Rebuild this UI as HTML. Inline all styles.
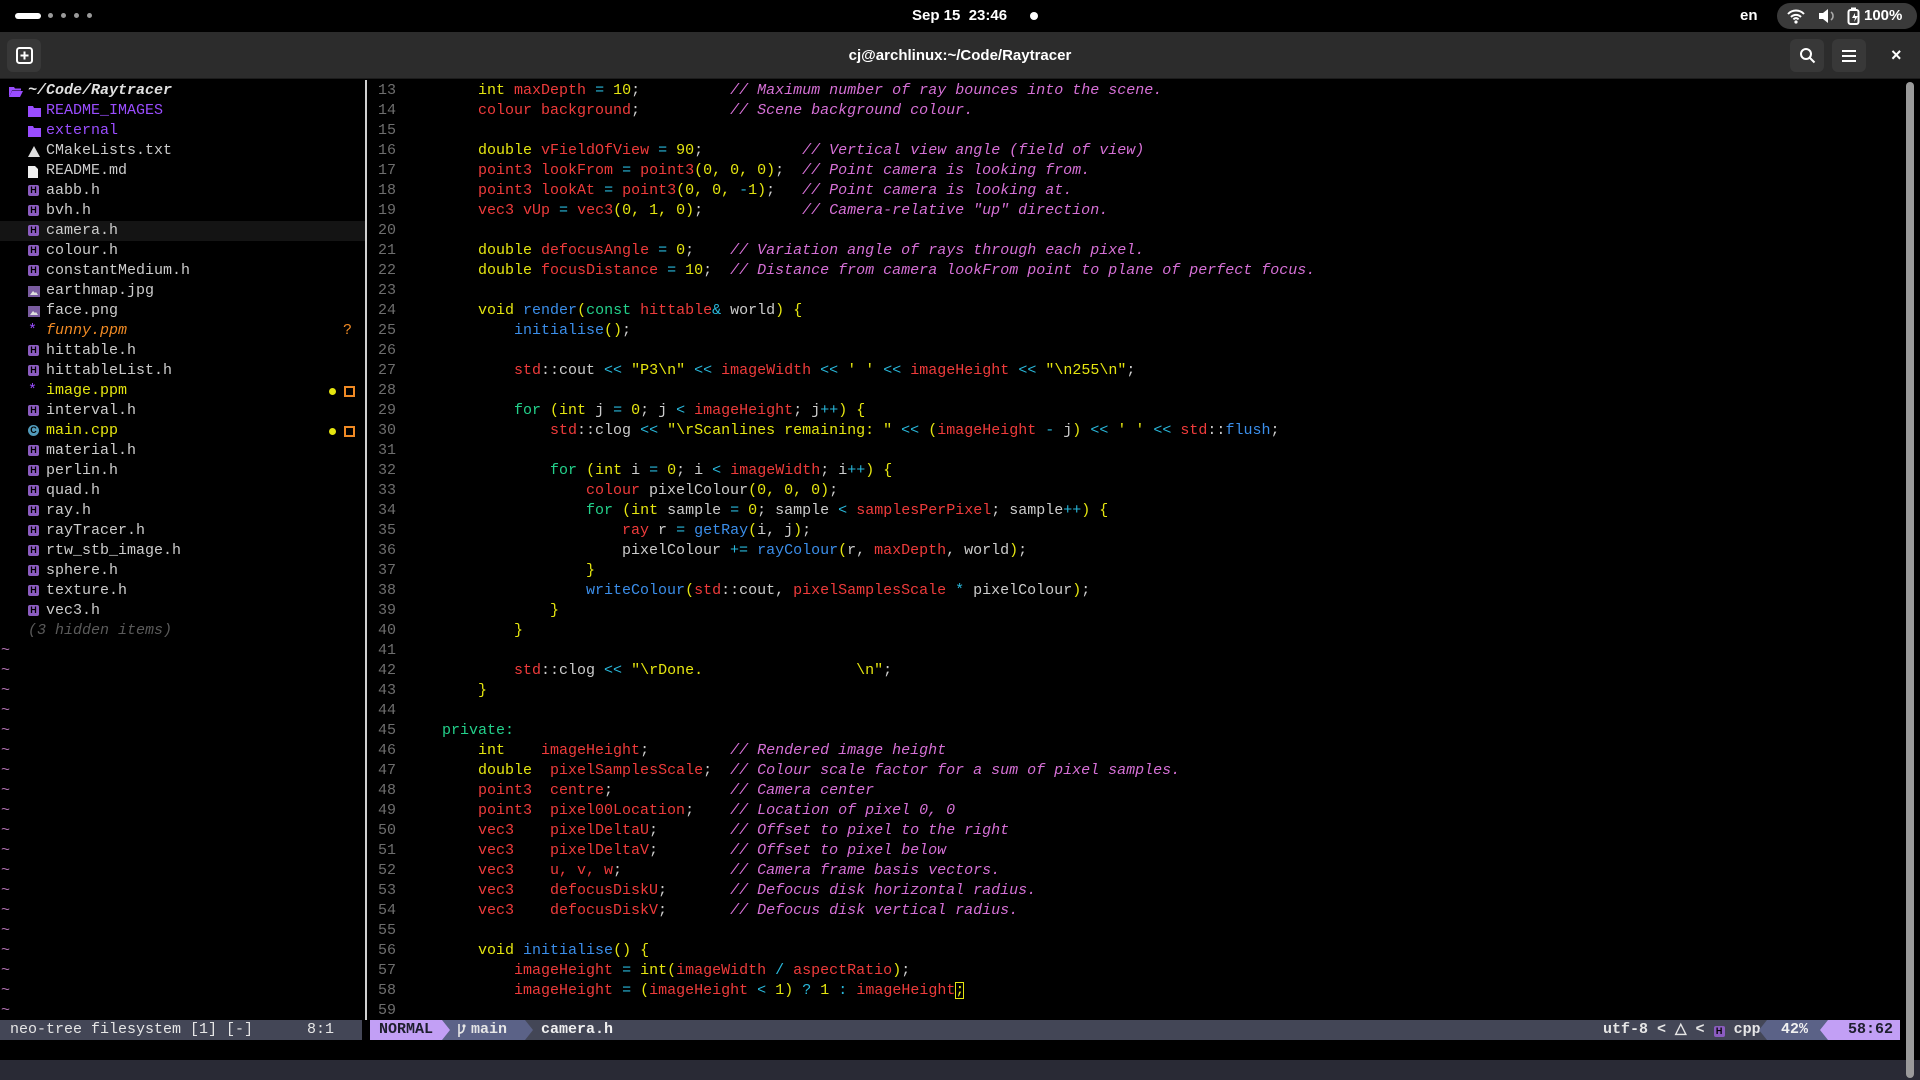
<!DOCTYPE html>
<html style="overflow:hidden;height:1080px"><head><meta charset="utf-8"><style>
*{margin:0;padding:0;box-sizing:border-box}
body{width:1920px;height:1080px;background:#000;overflow:hidden;position:relative;font-family:"Liberation Mono",monospace;font-size:15px;color:#cccccc}
.abs{position:absolute}
.top{left:0;top:0;width:1920px;height:32px;background:#000;font-family:"Liberation Sans",sans-serif;color:#fff;font-weight:bold;font-size:15px}
.tb{left:0;top:32px;width:1920px;height:47px;background:#2c2c2c;border-bottom:1px solid #1c1c1c;font-family:"Liberation Sans",sans-serif}
.btn{position:absolute;top:7px;width:34px;height:33px;background:#383838;border-radius:6px}
pre{font-family:"Liberation Mono",monospace;font-size:15px;line-height:20px;white-space:pre}
.row{position:absolute;height:20px;line-height:20px;white-space:pre}
.k{color:#e5e510}.r{color:#ef3b3b}.c{color:#29b8db}.m{color:#d670d6;font-style:italic}.g{color:#23d18b}.b{color:#3b8eea}.w{color:#cccccc}
.ln{position:absolute;left:368px;width:28px;text-align:right;color:#6e6e6e}
.hb{display:inline-block;width:11px;height:11px;background:#8b5cc0;border-radius:2px;color:#000;font-size:9px;line-height:11px;text-align:center;font-family:"Liberation Sans";font-weight:bold;vertical-align:-1px}
.fi{position:absolute;left:28px;top:5px}
.tn{position:absolute;left:46px}
</style></head><body>
<div class="abs top">
 <div class="abs" style="left:15px;top:13px;width:26px;height:6px;border-radius:3px;background:#fff"></div>
 <div class="abs" style="left:48px;top:13px;width:5px;height:5px;border-radius:3px;background:#9a9a9a"></div>
 <div class="abs" style="left:61px;top:13px;width:5px;height:5px;border-radius:3px;background:#9a9a9a"></div>
 <div class="abs" style="left:74px;top:13px;width:5px;height:5px;border-radius:3px;background:#9a9a9a"></div>
 <div class="abs" style="left:87px;top:13px;width:5px;height:5px;border-radius:3px;background:#9a9a9a"></div>
 <div class="abs" style="left:912px;top:7px">Sep 15&nbsp; 23:46</div>
 <div class="abs" style="left:1030px;top:12px;width:8px;height:8px;border-radius:4px;background:#fff"></div>
 <div class="abs" style="left:1740px;top:7px">en</div>
 <div class="abs" style="left:1777px;top:3px;width:140px;height:26px;border-radius:13px;background:#3a3a3a"></div>
 <svg class="abs" style="left:1787px;top:8px" width="18" height="16" viewBox="0 0 18 16"><path d="M1 6a11 11 0 0 1 16 0M4 9a7 7 0 0 1 10 0M6.5 11.5a3 3 0 0 1 5 0" stroke="#fff" stroke-width="2" fill="none"/><circle cx="9" cy="14" r="1.6" fill="#fff"/></svg>
 <svg class="abs" style="left:1818px;top:8px" width="18" height="16" viewBox="0 0 18 16"><path d="M1 5h4l5-4v14l-5-4H1z" fill="#fff"/><path d="M13 4a5 5 0 0 1 0 8" stroke="#aaa" stroke-width="1.6" fill="none"/></svg>
 <svg class="abs" style="left:1847px;top:7px" width="14" height="18" viewBox="0 0 14 18"><rect x="1.5" y="3" width="10" height="14" rx="2" fill="none" stroke="#fff" stroke-width="2"/><rect x="4" y="0.5" width="5" height="3" fill="#fff"/><path d="M8 6l-3 5h3l-1 4 4-6H8z" fill="#fff"/></svg>
 <div class="abs" style="left:1864px;top:7px">100%</div>
</div>
<div class="abs tb">
 <div class="btn" style="left:7px"><svg style="position:absolute;left:9px;top:8px" width="17" height="17" viewBox="0 0 17 17"><rect x="1" y="1" width="15" height="15" rx="2.5" fill="none" stroke="#fff" stroke-width="2"/><path d="M8.5 4.5v8M4.5 8.5h8" stroke="#fff" stroke-width="2"/></svg></div>
 <div class="abs" style="left:0;width:1920px;top:15px;text-align:center;color:#fff;font-weight:bold;font-size:15px">cj@archlinux:~/Code/Raytracer</div>
 <div class="btn" style="left:1790px"><svg style="position:absolute;left:9px;top:8px" width="17" height="17" viewBox="0 0 17 17"><circle cx="7" cy="7" r="5" fill="none" stroke="#fff" stroke-width="2"/><path d="M10.5 10.5l5 5" stroke="#fff" stroke-width="2"/></svg></div>
 <div class="btn" style="left:1832px"><svg style="position:absolute;left:9px;top:10px" width="16" height="14" viewBox="0 0 16 14"><path d="M1 2h14M1 7h14M1 12h14" stroke="#fff" stroke-width="2"/></svg></div>
 <div class="abs" style="left:1891px;top:13px;color:#fff;font-size:18px;font-weight:bold">×</div>
</div>

<!-- sidebar -->
<div class="abs" style="left:0;top:81px;width:365px;height:939px">
 <div class="row" style="top:140px;left:0;width:365px;background:#141414"></div>
 <div class="row" style="top:0;left:0;width:365px"><svg style="position:absolute;left:9px;top:5px" width="14" height="11" viewBox="0 0 14 11"><path d="M0 1h5l1 1.5h6v2H3L0 11z" fill="#9a4dff"/><path d="M3 5h11l-3 6H0z" fill="#9a4dff"/></svg><span style="position:absolute;left:28px;color:#e0e0e0;font-style:italic;font-weight:bold">~/Code/Raytracer</span></div>
 <div class="row" style="top:20px;left:0;width:365px"><svg class="fi" width="13" height="11" viewBox="0 0 13 11"><path d="M0 0h5l1 2h7v9H0z" fill="#9a4dff"/></svg><span class="tn" style="color:#9a4dff">README_IMAGES</span></div>
 <div class="row" style="top:40px;left:0;width:365px"><svg class="fi" width="13" height="11" viewBox="0 0 13 11"><path d="M0 0h5l1 2h7v9H0z" fill="#9a4dff"/></svg><span class="tn" style="color:#9a4dff">external</span></div>
 <div class="row" style="top:60px;left:0"><svg class="fi" width="12" height="11" viewBox="0 0 12 11"><path d="M6 0L12 11H0z" fill="#ddd"/></svg><span class="tn">CMakeLists.txt</span></div>
 <div class="row" style="top:80px;left:0"><svg class="fi" width="10" height="12" viewBox="0 0 10 12"><path d="M0 0h7l3 3v9H0z" fill="#eee"/></svg><span class="tn">README.md</span></div>
 <div class="row" style="top:100px"><span class="hb" style="position:absolute;left:28px;top:4px">H</span><span class="tn">aabb.h</span></div>
 <div class="row" style="top:120px"><span class="hb" style="position:absolute;left:28px;top:4px">H</span><span class="tn">bvh.h</span></div>
 <div class="row" style="top:140px"><span class="hb" style="position:absolute;left:28px;top:4px">H</span><span class="tn">camera.h</span></div>
 <div class="row" style="top:160px"><span class="hb" style="position:absolute;left:28px;top:4px">H</span><span class="tn">colour.h</span></div>
 <div class="row" style="top:180px"><span class="hb" style="position:absolute;left:28px;top:4px">H</span><span class="tn">constantMedium.h</span></div>
 <div class="row" style="top:200px"><svg class="fi" width="12" height="11" viewBox="0 0 12 11"><rect width="12" height="11" fill="#7a5ca0"/><path d="M2 9l3-4 2 2 1-1 2 3z" fill="#ddd"/></svg><span class="tn">earthmap.jpg</span></div>
 <div class="row" style="top:220px"><svg class="fi" width="12" height="11" viewBox="0 0 12 11"><rect width="12" height="11" fill="#7a5ca0"/><path d="M2 9l3-4 2 2 1-1 2 3z" fill="#ddd"/></svg><span class="tn">face.png</span></div>
 <div class="row" style="top:240px;width:365px"><span style="position:absolute;left:28px;color:#9a4dff">*</span><span class="tn" style="color:#f08a24;font-style:italic">funny.ppm</span><span style="position:absolute;left:343px;color:#f08a24">?</span></div>
 <div class="row" style="top:260px"><span class="hb" style="position:absolute;left:28px;top:4px">H</span><span class="tn">hittable.h</span></div>
 <div class="row" style="top:280px"><span class="hb" style="position:absolute;left:28px;top:4px">H</span><span class="tn">hittableList.h</span></div>
 <div class="row" style="top:300px;width:365px"><span style="position:absolute;left:28px;color:#9a4dff">*</span><span class="tn" style="color:#e5e510">image.ppm</span><span class="abs" style="left:329px;top:7px;width:7px;height:7px;border-radius:4px;background:#e5e510"></span><span class="abs" style="left:344px;top:5px;width:11px;height:11px;border:2px solid #f08a24"></span></div>
 <div class="row" style="top:320px"><span class="hb" style="position:absolute;left:28px;top:4px">H</span><span class="tn">interval.h</span></div>
 <div class="row" style="top:340px;width:365px"><span class="hb" style="position:absolute;left:28px;top:4px;background:#519aba;border-radius:6px">C</span><span class="tn" style="color:#e5e510">main.cpp</span><span class="abs" style="left:329px;top:7px;width:7px;height:7px;border-radius:4px;background:#e5e510"></span><span class="abs" style="left:344px;top:5px;width:11px;height:11px;border:2px solid #f08a24"></span></div>
 <div class="row" style="top:360px"><span class="hb" style="position:absolute;left:28px;top:4px">H</span><span class="tn">material.h</span></div>
 <div class="row" style="top:380px"><span class="hb" style="position:absolute;left:28px;top:4px">H</span><span class="tn">perlin.h</span></div>
 <div class="row" style="top:400px"><span class="hb" style="position:absolute;left:28px;top:4px">H</span><span class="tn">quad.h</span></div>
 <div class="row" style="top:420px"><span class="hb" style="position:absolute;left:28px;top:4px">H</span><span class="tn">ray.h</span></div>
 <div class="row" style="top:440px"><span class="hb" style="position:absolute;left:28px;top:4px">H</span><span class="tn">rayTracer.h</span></div>
 <div class="row" style="top:460px"><span class="hb" style="position:absolute;left:28px;top:4px">H</span><span class="tn">rtw_stb_image.h</span></div>
 <div class="row" style="top:480px"><span class="hb" style="position:absolute;left:28px;top:4px">H</span><span class="tn">sphere.h</span></div>
 <div class="row" style="top:500px"><span class="hb" style="position:absolute;left:28px;top:4px">H</span><span class="tn">texture.h</span></div>
 <div class="row" style="top:520px"><span class="hb" style="position:absolute;left:28px;top:4px">H</span><span class="tn">vec3.h</span></div>
 <div class="row" style="top:540px;left:28px;color:#5a5a5a;font-style:italic">(3 hidden items)</div>
 <pre class="abs" style="left:1px;top:560px;color:#b070b0">~
~
~
~
~
~
~
~
~
~
~
~
~
~
~
~
~
~
~</pre>
</div>
<div class="abs" style="left:365px;top:80px;width:2px;height:940px;background:#d0d0d0"></div>

<!-- line numbers -->
<pre class="ln" style="top:81px">13
14
15
16
17
18
19
20
21
22
23
24
25
26
27
28
29
30
31
32
33
34
35
36
37
38
39
40
41
42
43
44
45
46
47
48
49
50
51
52
53
54
55
56
57
58
59</pre>

<pre class="abs" style="left:442px;top:81px">    <span class="k">int</span> <span class="r">maxDepth</span> <span class="c">=</span> <span class="k">10</span>;          <span class="m">// Maximum number of ray bounces into the scene.</span>
    <span class="r">colour background</span>;          <span class="m">// Scene background colour.</span>

    <span class="k">double</span> <span class="r">vFieldOfView</span> <span class="c">=</span> <span class="k">90</span>;           <span class="m">// Vertical view angle (field of view)</span>
    <span class="r">point3 lookFrom</span> <span class="c">=</span> <span class="r">point3</span><span class="k">(0, 0, 0)</span>;  <span class="m">// Point camera is looking from.</span>
    <span class="r">point3 lookAt</span> <span class="c">=</span> <span class="r">point3</span><span class="k">(0, 0, </span><span class="c">-</span><span class="k">1)</span>;   <span class="m">// Point camera is looking at.</span>
    <span class="r">vec3 vUp</span> <span class="c">=</span> <span class="r">vec3</span><span class="k">(0, 1, 0)</span>;           <span class="m">// Camera-relative "up" direction.</span>

    <span class="k">double</span> <span class="r">defocusAngle</span> <span class="c">=</span> <span class="k">0</span>;    <span class="m">// Variation angle of rays through each pixel.</span>
    <span class="k">double</span> <span class="r">focusDistance</span> <span class="c">=</span> <span class="k">10</span>;  <span class="m">// Distance from camera lookFrom point to plane of perfect focus.</span>

    <span class="k">void</span> <span class="b">render</span><span class="k">(</span><span class="g">const</span> <span class="r">hittable</span><span class="c">&amp;</span> world<span class="k">)</span> <span class="k">{</span>
        <span class="b">initialise</span><span class="k">()</span>;

        <span class="r">std</span>::cout <span class="c">&lt;&lt;</span> <span class="k">"P3\n"</span> <span class="c">&lt;&lt;</span> <span class="r">imageWidth</span> <span class="c">&lt;&lt;</span> <span class="k">' '</span> <span class="c">&lt;&lt;</span> <span class="r">imageHeight</span> <span class="c">&lt;&lt;</span> <span class="k">"\n255\n"</span>;

        <span class="g">for</span> <span class="k">(int</span> j <span class="c">=</span> <span class="k">0</span>; j <span class="c">&lt;</span> <span class="r">imageHeight</span>; j<span class="c">++</span><span class="k">) {</span>
            <span class="r">std</span>::clog <span class="c">&lt;&lt;</span> <span class="k">"\rScanlines remaining: "</span> <span class="c">&lt;&lt;</span> <span class="k">(</span><span class="r">imageHeight</span> <span class="c">-</span> j<span class="k">)</span> <span class="c">&lt;&lt;</span> <span class="k">' '</span> <span class="c">&lt;&lt;</span> <span class="r">std</span>::<span class="b">flush</span>;

            <span class="g">for</span> <span class="k">(int</span> i <span class="c">=</span> <span class="k">0</span>; i <span class="c">&lt;</span> <span class="r">imageWidth</span>; i<span class="c">++</span><span class="k">) {</span>
                <span class="r">colour</span> pixelColour<span class="k">(0, 0, 0)</span>;
                <span class="g">for</span> <span class="k">(int</span> sample <span class="c">=</span> <span class="k">0</span>; sample <span class="c">&lt;</span> <span class="r">samplesPerPixel</span>; sample<span class="c">++</span><span class="k">) {</span>
                    <span class="r">ray</span> r <span class="c">=</span> <span class="b">getRay</span><span class="k">(</span>i, j<span class="k">)</span>;
                    pixelColour <span class="c">+=</span> <span class="b">rayColour</span><span class="k">(</span>r, <span class="r">maxDepth</span>, world<span class="k">)</span>;
                <span class="k">}</span>
                <span class="b">writeColour</span><span class="k">(</span><span class="r">std</span>::cout, <span class="r">pixelSamplesScale</span> <span class="c">*</span> pixelColour<span class="k">)</span>;
            <span class="k">}</span>
        <span class="k">}</span>

        <span class="r">std</span>::clog <span class="c">&lt;&lt;</span> <span class="k">"\rDone.                 \n"</span>;
    <span class="k">}</span>

<span class="g">private:</span>
    <span class="k">int</span>    <span class="r">imageHeight</span>;         <span class="m">// Rendered image height</span>
    <span class="k">double</span>  <span class="r">pixelSamplesScale</span>;  <span class="m">// Colour scale factor for a sum of pixel samples.</span>
    <span class="r">point3  centre</span>;             <span class="m">// Camera center</span>
    <span class="r">point3  pixel00Location</span>;    <span class="m">// Location of pixel 0, 0</span>
    <span class="r">vec3    pixelDeltaU</span>;        <span class="m">// Offset to pixel to the right</span>
    <span class="r">vec3    pixelDeltaV</span>;        <span class="m">// Offset to pixel below</span>
    <span class="r">vec3    u, v, w</span>;            <span class="m">// Camera frame basis vectors.</span>
    <span class="r">vec3    defocusDiskU</span>;       <span class="m">// Defocus disk horizontal radius.</span>
    <span class="r">vec3    defocusDiskV</span>;       <span class="m">// Defocus disk vertical radius.</span>

    <span class="k">void</span> <span class="b">initialise</span><span class="k">() {</span>
        <span class="r">imageHeight</span> <span class="c">=</span> <span class="k">int(</span><span class="r">imageWidth</span> <span class="c">/</span> <span class="r">aspectRatio</span><span class="k">)</span>;
        <span class="r">imageHeight</span> <span class="c">=</span> <span class="k">(</span><span class="r">imageHeight</span> <span class="c">&lt;</span> <span class="k">1)</span> <span class="c">?</span> <span class="k">1</span> <span class="c">:</span> <span class="r">imageHeight</span><span style="outline:1px solid #e5e510;outline-offset:-1px;color:#e5e510">;</span></pre>

<!-- scrollbar -->
<div class="abs" style="left:1906px;top:82px;width:8px;height:996px;border-radius:4px;background:#9a9a9a"></div>

<!-- status line -->
<div class="abs" style="left:0;top:1020px;width:362px;height:20px;background:#434656;color:#e6e6e6;line-height:20px;white-space:pre;padding-left:10px">neo-tree filesystem [1] [-]      8:1</div>
<div class="abs" style="left:370px;top:1020px;width:1530px;height:20px;background:#434656;line-height:20px;white-space:pre;font-weight:bold">
 <div class="abs" style="left:0;top:0;width:72px;height:20px;background:#c29ff5;color:#1e1e2e;padding-left:9px">NORMAL</div>
 <div class="abs" style="left:72px;top:0;width:0;height:0;border-top:10px solid transparent;border-bottom:10px solid transparent;border-left:8px solid #c29ff5;z-index:2"></div>
 <div class="abs" style="left:72px;top:0;width:83px;height:20px;background:#5b6287;color:#e6e6e6"><svg style="position:absolute;left:15px;top:4px" width="9" height="13" viewBox="0 0 9 13"><path d="M2 0v13M2 9c4 0 5-3 5-6" stroke="#e6e6e6" stroke-width="1.6" fill="none"/><circle cx="7" cy="2" r="1.6" fill="#e6e6e6"/></svg><span style="position:absolute;left:29px">main</span></div>
 <div class="abs" style="left:155px;top:0;width:0;height:0;border-top:10px solid transparent;border-bottom:10px solid transparent;border-left:8px solid #5b6287"></div>
 <div class="abs" style="left:171px;top:0;color:#f0f0f0">camera.h</div>
 <div class="abs" style="left:1233px;top:0;color:#e6e6e6">utf-8 &lt; &#x25B3; &lt; <span class="hb" style="vertical-align:-1px">H</span> cpp</div>
 <div class="abs" style="left:1397px;top:0;width:61px;height:20px;background:#5b6287;color:#f0f0f0;padding-left:14px">42%</div>
 <div class="abs" style="left:1389px;top:0;width:0;height:0;border-top:10px solid transparent;border-bottom:10px solid transparent;border-right:8px solid #5b6287"></div>
 <div class="abs" style="left:1458px;top:0;width:72px;height:20px;background:#c29ff5;color:#1e1e2e;padding-left:20px">58:62</div>
 <div class="abs" style="left:1450px;top:0;width:0;height:0;border-top:10px solid transparent;border-bottom:10px solid transparent;border-right:8px solid #c29ff5"></div>
</div>
<div class="abs" style="left:0;top:1060px;width:1920px;height:20px;background:#292a35"></div>
<div class="abs" style="left:1906px;top:1040px;width:8px;height:38px;border-radius:4px;background:#9a9a9a"></div>
</body></html>
